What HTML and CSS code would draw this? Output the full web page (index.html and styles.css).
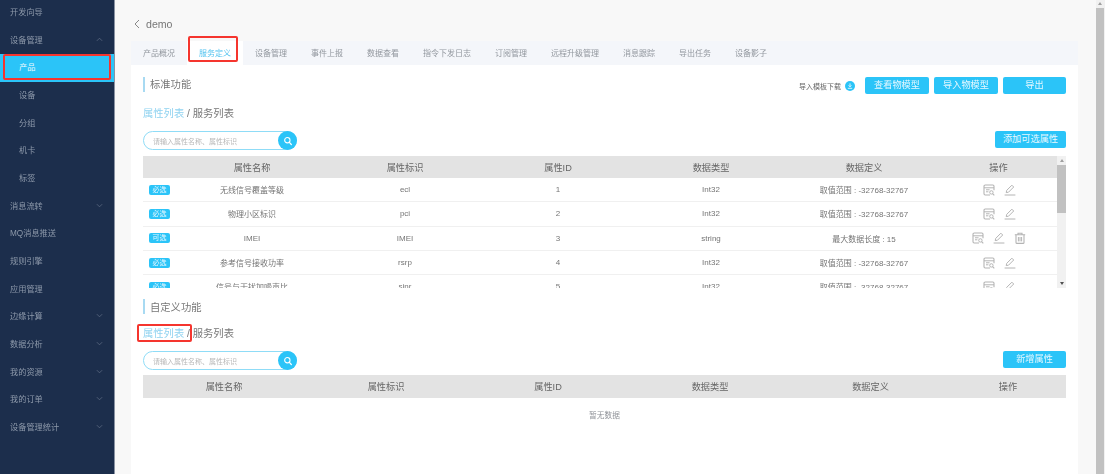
FILE: index.html
```html
<!DOCTYPE html>
<html lang="zh">
<head>
<meta charset="utf-8">
<title>demo</title>
<link rel="stylesheet" href="styles.css">
</head>
<body>
<svg class="defs" width="0" height="0">
  <symbol id="i-detail" viewBox="0 0 12 12">
    <path d="M7 11H2.2A1.2 1.2 0 0 1 1 9.8V2.2A1.2 1.2 0 0 1 2.2 1h7.6A1.2 1.2 0 0 1 11 2.2v4" fill="none" stroke="currentColor" stroke-width="1.1"/>
    <path d="M1 3.8h10M3 5.8h3.6M3 7.8h2.4" fill="none" stroke="currentColor" stroke-width="1"/>
    <circle cx="8.4" cy="8.4" r="1.7" fill="#fff" stroke="currentColor" stroke-width="1"/>
    <path d="M9.6 9.6l1.7 1.7" stroke="currentColor" stroke-width="1.1"/>
  </symbol>
  <symbol id="i-pen" viewBox="0 0 12 12">
    <path d="M2.2 8.6l.5-2.2L7.9 1.2l1.8 1.8-5.2 5.2z" fill="none" stroke="currentColor" stroke-width="1" stroke-linejoin="round"/>
    <path d="M.6 11h10.8" stroke="currentColor" stroke-width="1"/>
  </symbol>
  <symbol id="i-trash" viewBox="0 0 12 12">
    <path d="M.8 2.8h10.4M4 2.6V1.2h4v1.4" fill="none" stroke="currentColor" stroke-width="1.1"/>
    <path d="M2 2.8v7.6a1 1 0 0 0 1 1h6a1 1 0 0 0 1-1V2.8" fill="none" stroke="currentColor" stroke-width="1.1"/>
    <path d="M4.4 5v4.4M6 5v4.4M7.6 5v4.4" stroke="currentColor" stroke-width="1"/>
  </symbol>
  <symbol id="i-search" viewBox="0 0 12 12">
    <circle cx="5.2" cy="5" r="3.2" fill="none" stroke="currentColor" stroke-width="1.3"/>
    <path d="M7.4 7.4l2.6 2.8" stroke="currentColor" stroke-width="1.5" stroke-linecap="round"/>
  </symbol>
  <symbol id="i-down" viewBox="0 0 8 5">
    <path d="M1 1l3 3 3-3" fill="none" stroke="currentColor" stroke-width=".8"/>
  </symbol>
  <symbol id="i-up" viewBox="0 0 8 5">
    <path d="M1 4l3-3 3 3" fill="none" stroke="currentColor" stroke-width=".8"/>
  </symbol>
</svg>

<div class="app">
  <aside class="side">
    <ul class="menu">
      <li class="menu-item">开发向导</li>
      <li class="menu-item">设备管理<svg class="chev"><use href="#i-up"/></svg></li>
      <li class="menu-item sub active">产品</li>
      <li class="menu-item sub">设备</li>
      <li class="menu-item sub">分组</li>
      <li class="menu-item sub">机卡</li>
      <li class="menu-item sub">标签</li>
      <li class="menu-item">消息流转<svg class="chev"><use href="#i-down"/></svg></li>
      <li class="menu-item">MQ消息推送</li>
      <li class="menu-item">规则引擎</li>
      <li class="menu-item">应用管理</li>
      <li class="menu-item">边缘计算<svg class="chev"><use href="#i-down"/></svg></li>
      <li class="menu-item">数据分析<svg class="chev"><use href="#i-down"/></svg></li>
      <li class="menu-item">我的资源<svg class="chev"><use href="#i-down"/></svg></li>
      <li class="menu-item">我的订单<svg class="chev"><use href="#i-down"/></svg></li>
      <li class="menu-item">设备管理统计<svg class="chev"><use href="#i-down"/></svg></li>
    </ul>
    <div class="mark mark-side"></div>
  </aside>

  <main class="content">
    <div class="back"><svg class="back-icon" viewBox="0 0 6 10"><path d="M5 1L1 5l4 4" fill="none" stroke="currentColor" stroke-width="1"/></svg><span>demo</span></div>

    <nav class="tabs">
      <span class="tab">产品概况</span>
      <span class="tab tab-on">服务定义<i class="mark mark-tab"></i></span>
      <span class="tab">设备管理</span>
      <span class="tab">事件上报</span>
      <span class="tab">数据查看</span>
      <span class="tab">指令下发日志</span>
      <span class="tab">订阅管理</span>
      <span class="tab">远程升级管理</span>
      <span class="tab">消息跟踪</span>
      <span class="tab">导出任务</span>
      <span class="tab">设备影子</span>
    </nav>

    <section class="card">
      <div class="head">
        <h2 class="title">标准功能</h2>
        <div class="actions">
          <span class="tpl">导入模板下载</span>
          <svg class="tpl-icon" viewBox="0 0 10 10"><circle cx="5" cy="5" r="5" fill="#2bc4f8"/><path d="M5 2.4v3.2M3.6 4.4L5 5.8l1.4-1.4M2.8 7.3h4.4" fill="none" stroke="#fff" stroke-width=".8"/></svg>
          <button class="btn btn-model">查看物模型</button>
          <button class="btn btn-model">导入物模型</button>
          <button class="btn btn-export">导出</button>
        </div>
      </div>
      <div class="sub-nav"><a class="sub-link">属性列表</a> / 服务列表</div>
      <div class="toolbar">
        <div class="search"><span class="ph">请输入属性名称、属性标识</span><span class="search-btn"><svg class="search-icon"><use href="#i-search"/></svg></span></div>
        <button class="btn btn-add">添加可选属性</button>
      </div>

      <div class="scroll-table">
        <div class="viewport">
          <div class="row row-head cols-a"><span></span><span>属性名称</span><span>属性标识</span><span>属性ID</span><span>数据类型</span><span>数据定义</span><span>操作</span></div>
          <div class="row cols-a"><span class="tag-cell"><b class="tag">必选</b></span><span>无线信号覆盖等级</span><span>ecl</span><span>1</span><span>Int32</span><span>取值范围 : -32768-32767</span><span class="ops"><svg class="op"><use href="#i-detail"/></svg><svg class="op"><use href="#i-pen"/></svg></span></div>
          <div class="row cols-a"><span class="tag-cell"><b class="tag">必选</b></span><span>物理小区标识</span><span>pci</span><span>2</span><span>Int32</span><span>取值范围 : -32768-32767</span><span class="ops"><svg class="op"><use href="#i-detail"/></svg><svg class="op"><use href="#i-pen"/></svg></span></div>
          <div class="row cols-a"><span class="tag-cell"><b class="tag">可选</b></span><span>IMEI</span><span>IMEI</span><span>3</span><span>string</span><span>最大数据长度 : 15</span><span class="ops"><svg class="op"><use href="#i-detail"/></svg><svg class="op"><use href="#i-pen"/></svg><svg class="op"><use href="#i-trash"/></svg></span></div>
          <div class="row cols-a"><span class="tag-cell"><b class="tag">必选</b></span><span>参考信号接收功率</span><span>rsrp</span><span>4</span><span>Int32</span><span>取值范围 : -32768-32767</span><span class="ops"><svg class="op"><use href="#i-detail"/></svg><svg class="op"><use href="#i-pen"/></svg></span></div>
          <div class="row cols-a"><span class="tag-cell"><b class="tag">必选</b></span><span>信号与干扰加噪声比</span><span>sinr</span><span>5</span><span>Int32</span><span>取值范围 : -32768-32767</span><span class="ops"><svg class="op"><use href="#i-detail"/></svg><svg class="op"><use href="#i-pen"/></svg></span></div>
        </div>
        <div class="bar">
          <span class="arrow arrow-up"></span>
          <span class="thumb"></span>
          <span class="arrow arrow-down"></span>
        </div>
      </div>

      <h2 class="title title-custom">自定义功能</h2>
      <div class="sub-nav"><a class="sub-link">属性列表<i class="mark mark-sub"></i></a> / 服务列表</div>
      <div class="toolbar">
        <div class="search"><span class="ph">请输入属性名称、属性标识</span><span class="search-btn"><svg class="search-icon"><use href="#i-search"/></svg></span></div>
        <button class="btn btn-export">新增属性</button>
      </div>
      <div class="row row-head cols-b head-b"><span>属性名称</span><span>属性标识</span><span>属性ID</span><span>数据类型</span><span>数据定义</span><span>操作</span></div>
      <div class="empty">暂无数据</div>
    </section>
  </main>

  <div class="page-bar"><span class="page-arrow"></span><span class="page-thumb"></span></div>
</div>
</body>
</html>
```

FILE: styles.css
```css
* { box-sizing: border-box; }
html, body { margin: 0; height: 100%; overflow: hidden; background: #f8f8f8; }
body { font-family: "Liberation Sans", "Noto Sans CJK SC", sans-serif; color: #666; }
.defs { position: absolute; }

.app { display: flex; height: 474px; filter: blur(.5px); }

.side { position: relative; width: 115px; flex: none; background: #1c2e4c; border-right: 1px solid #8a93a3; }
.menu { list-style: none; margin: -1.2px 0 0; padding: 0; }
.menu-item { position: relative; height: 27.7px; line-height: 27.7px; padding-left: 10px; font-size: 8.2px; color: #8d99aa; white-space: nowrap; }
.menu-item.sub { padding-left: 19px; }
.menu-item.active { background: #2bc4f8; color: #f0fbff; }
.chev { position: absolute; right: 11px; top: 10px; width: 7px; height: 5px; color: #66738a; }

.mark { position: absolute; border: 2px solid #f5352e; border-radius: 2px; pointer-events: none; }
.mark-side { left: 3px; top: 54px; width: 108px; height: 26px; }
.mark-tab { left: 1px; top: -5px; width: 50px; height: 26px; }
.mark-sub { left: -6px; top: -4px; width: 55px; height: 18px; }

.content { flex: 1; min-width: 0; padding: 0 18px 0 16px; }
.back { display: flex; align-items: center; height: 14px; margin: 17px 0 10px; font-size: 10.6px; color: #777; }
.back-icon { width: 6px; height: 10px; margin: 0 6px 0 3px; color: #888; }

.tabs { display: flex; height: 24px; background: #f4f6fa; }
.tab { position: relative; padding: 0 12px; line-height: 25px; font-size: 8px; color: #92979e; white-space: nowrap; }
.tab-on { background: #fff; color: #55c4f0; }

.card { background: #fff; height: 409px; padding: 12px 12px 0; }
.head { display: flex; justify-content: space-between; align-items: flex-start; }
.title { margin: 0; height: 15px; line-height: 15px; padding-left: 5px; border-left: 2px solid #a8daf2; font-size: 10.3px; font-weight: 400; color: #777; }
.title-custom { margin-top: 11px; line-height: 17px; }
.actions { display: flex; align-items: center; height: 17px; }
.tpl { font-size: 7px; color: #666; margin: 1px 4px 0 0; }
.tpl-icon { width: 10px; height: 10px; margin: 1px 10px 0 0; }

.btn { height: 17px; border: 0; padding: 0; border-radius: 2px; background: #2bc4f8; color: #e6f8ff; font: 9.2px/17px "Liberation Sans", "Noto Sans CJK SC", sans-serif; }
.btn-model { width: 64px; margin-right: 5px; }
.btn-export { width: 63px; }
.btn-add { width: 71px; }

.sub-nav { margin-top: 12px; height: 14px; line-height: 16px; font-size: 10.3px; color: #777; }
.sub-link { position: relative; color: #8fd2f0; }

.toolbar { display: flex; justify-content: space-between; align-items: flex-start; height: 19px; margin-top: 11px; }
.search { display: flex; align-items: center; justify-content: space-between; width: 154px; height: 19px; padding-left: 9px; border: 1px solid #8fdcf7; border-radius: 10px; }
.ph { font-size: 7px; color: #b8b8b8; }
.search-btn { display: flex; align-items: center; justify-content: center; width: 19px; height: 19px; margin-right: -1px; border-radius: 50%; background: #2bc4f8; }
.search-icon { width: 10px; height: 10px; color: #fff; }

.scroll-table { display: flex; height: 132px; margin-top: 6px; }
.viewport { flex: 1; min-width: 0; overflow: hidden; }
.row { display: grid; align-items: center; height: 24.3px; border-bottom: 1px solid #f0f0f0; text-align: center; font-size: 8px; color: #757575; }
.row-head { height: 22px; background: #e3e3e3; border-bottom: 0; font-size: 9.2px; color: #666; }
.cols-a { grid-template-columns: 32.5px 153px 153px 153px 153px 153px 116px; }
.cols-b { grid-template-columns: 162px 162px 162px 162px 159px 116px; }
.head-b { height: 23px; margin-top: 5px; padding-bottom: 1px; }
.tag-cell { text-align: left; padding-left: 6px; }
.tag { display: block; width: 21px; height: 10px; line-height: 10px; border-radius: 2px; background: #2bc4f8; color: #e8f8ff; font-size: 7px; font-weight: 400; text-align: center; }
.ops { display: flex; justify-content: center; gap: 9px; color: #b4b4b4; padding-left: 1px; }
.op { width: 12px; height: 12px; }

.bar { display: flex; flex-direction: column; width: 9px; flex: none; background: #f1f1f1; }
.thumb { height: 48px; background: #c1c1c1; }
.arrow { height: 9px; flex: none; position: relative; }
.arrow::after { content: ""; position: absolute; left: 2.5px; top: 3px; border: 2px solid transparent; }
.arrow-up::after { border-top: 0; border-bottom: 3px solid #a0a0a0; }
.arrow-down { margin-top: auto; }
.arrow-down::after { border-bottom: 0; border-top: 3px solid #505050; }

.empty { height: 36px; line-height: 36px; text-align: center; font-size: 7.7px; color: #909399; }

.page-bar { display: flex; flex-direction: column; width: 9px; flex: none; padding-right: 1px; background: #f1f1f1; }
.page-arrow { position: relative; height: 8px; flex: none; }
.page-arrow::after { content: ""; position: absolute; left: 2px; top: 2px; border: 2px solid transparent; border-top: 0; border-bottom: 3px solid #a0a0a0; }
.page-thumb { flex: 1; background: #c1c1c1; }
```
